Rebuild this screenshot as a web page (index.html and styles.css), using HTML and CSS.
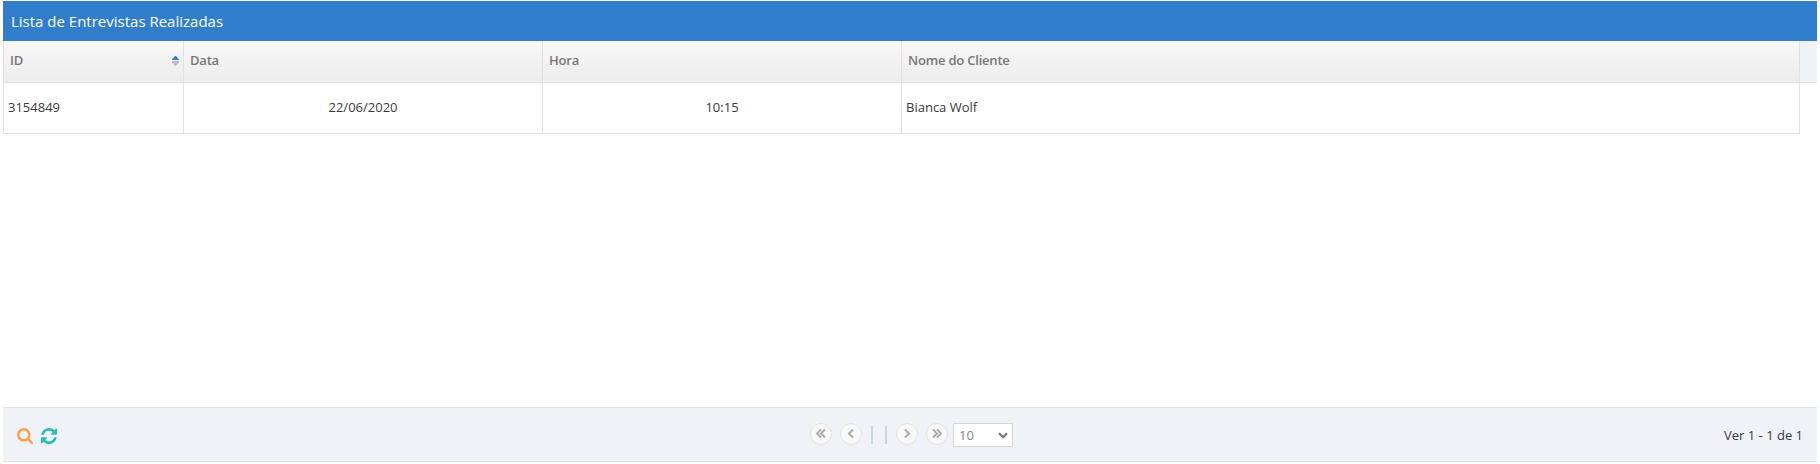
FILE: index.html
```html
<!DOCTYPE html>
<html lang="pt-BR">
<head>
<meta charset="utf-8">
<title>Lista de Entrevistas Realizadas</title>
<link rel="stylesheet" href="styles.css">
</head>
<body>
<section class="grid">
  <header class="grid-title">Lista de Entrevistas Realizadas</header>
  <div class="grid-head">
    <div class="columns head-row">
      <div class="th">ID
        <svg class="sort" width="7" height="10" viewBox="0 0 7 10"><path fill="#307ecc" d="M3 0h1l3 3.500V4H0v-.5z"/><path fill="#bbb" d="M0 5h7v1.500L4 10H3L0 6.500z"/></svg>
      </div>
      <div class="th">Data</div>
      <div class="th">Hora</div>
      <div class="th">Nome do Cliente</div>
    </div>
  </div>
  <div class="grid-body">
    <div class="columns body-row">
      <div class="td">3154849</div>
      <div class="td center">22/06/2020</div>
      <div class="td center">10:15</div>
      <div class="td">Bianca Wolf</div>
    </div>
  </div>
  <footer class="pager">
    <div class="tools">
      <svg class="search" viewBox="64 128 1664 1664"><path d="M1216 832q0-185-131.5-316.5t-316.5-131.5-316.5 131.5-131.5 316.5 131.5 316.5 316.5 131.5 316.5-131.5 131.5-316.5zm512 832q0 52-38 90t-90 38q-54 0-90-38l-343-342q-179 124-399 124-143 0-273.5-55.5t-225-150-150-225-55.5-273.5 55.5-273.5 150-225 225-150 273.5-55.5 273.5 55.5 225 150 150 225 55.5 273.5q0 220-124 399l343 343q37 37 37 90z"/></svg>
      <svg class="refresh" viewBox="128 128 1536 1536"><path d="M1639 1056q0 5-1 7-64 268-268 434.5t-478 166.5q-146 0-282.5-55t-243.5-157l-129 129q-19 19-45 19t-45-19-19-45v-448q0-26 19-45t45-19h448q26 0 45 19t19 45-19 45l-137 137q71 66 161 102t187 36q134 0 250-65t186-179q11-17 53-117 8-23 30-23h192q13 0 22.5 9.5t9.5 22.5zm25-800v448q0 26-19 45t-45 19h-448q-26 0-45-19t-19-45 19-45l138-138q-148-137-349-137-134 0-250 65t-186 179q-11 17-53 117-8 23-30 23h-199q-13 0-22.5-9.5t-9.5-22.5v-7q65-268 270-434.5t480-166.5q146 0 284 55.5t245 156.5l130-129q19-19 45-19t45 19 19 45z"/></svg>
    </div>
    <div class="nav">
      <span class="round"><svg viewBox="0 0 20 20"><path d="M10 5.500l-4 4 4 4M14 5.500l-4 4 4 4"/></svg></span>
      <span class="round"><svg viewBox="0 0 20 20"><path d="M12 5.500l-4 4 4 4"/></svg></span>
      <span class="sep"></span>
      <span class="sep"></span>
      <span class="round"><svg viewBox="0 0 20 20"><path d="M8 5.500l4 4-4 4"/></svg></span>
      <span class="round"><svg viewBox="0 0 20 20"><path d="M6 5.500l4 4-4 4M10 5.500l4 4-4 4"/></svg></span>
      <div class="select">10<svg width="10" height="7" viewBox="0 0 10 7"><path d="M1 1.200l4 4 4-4"/></svg></div>
    </div>
    <div class="info">Ver 1 - 1 de 1</div>
  </footer>
</section>
</body>
</html>
```
FILE: styles.css
```css
* { box-sizing: border-box; }

body {
  margin: 0;
  background: #fff;
  color: #393939;
  font: 13px/20px "Open Sans", sans-serif;
}

.grid {
  display: flex;
  flex-direction: column;
  width: 1814px;
  height: 461px;
  margin: 1px 0 0 3px;
}

.grid-title {
  height: 40px;
  padding-left: 8px;
  background: #307ecc;
  color: #fff;
  font-size: 15px;
  line-height: 41px;
}

.grid-head {
  height: 42px;
  background: #eff3f8;
  border-bottom: 1px solid #e1e1e1;
}

.columns {
  display: grid;
  grid-template-columns: 180px 359px 359px 898px;
  width: 1797px;
  border-left: 1px solid #e1e1e1;
}

.head-row {
  height: 41px;
  background: linear-gradient(#f8f8f8, #ececec);
}

.th {
  display: flex;
  align-items: center;
  justify-content: space-between;
  padding: 0 4px 4px 6px;
  border-right: 1px solid #e1e1e1;
  color: #777;
  font-weight: 600;
  letter-spacing: -0.2px;
}

.sort { margin-top: 3px; }

.grid-body { flex: 1; }

.body-row {
  height: 51px;
  border-bottom: 1px solid #e1e1e1;
}

.td {
  padding: 14px 4px 0;
  border-right: 1px solid #e1e1e1;
}

.center { text-align: center; }

.pager {
  display: grid;
  grid-template-columns: 807px 1fr 200px;
  height: 55px;
  background: #eff3f8;
  border-top: 1px solid #e1e1e1;
  border-bottom: 1px solid #e1e1e1;
}

.tools {
  display: flex;
  gap: 8px;
  padding: 20px 0 0 14px;
}

.search { width: 16px; height: 16px; fill: #fe9e4b; }
.refresh { width: 16px; height: 16px; fill: #2bbcb8; }

.nav {
  display: flex;
  align-items: flex-start;
  padding-top: 15px;
}

.round {
  width: 22px;
  height: 22px;
  margin-right: 8px;
  border: 1px solid #e1e1e1;
  border-radius: 50%;
  background: #f8f8f8;
}

.round svg {
  display: block;
  width: 20px;
  height: 20px;
  fill: none;
  stroke: #aaa;
  stroke-width: 1.9;
}

.sep {
  width: 2px;
  height: 18px;
  margin: 3px 11px 0 1px;
  background: #c7d5dc;
}

.sep + .round { margin-left: -2px; }

.round + .select { margin-left: -3px; }

.select {
  display: flex;
  align-items: center;
  justify-content: space-between;
  width: 60px;
  height: 24px;
  padding: 0 4px 0 5px;
  background: #fff;
  border: 1px solid #d5d5d5;
  color: #858585;
}

.select svg { fill: none; stroke: #777; stroke-width: 2.2; }

.info {
  padding: 17px 14px 0 0;
  text-align: right;
}
```
